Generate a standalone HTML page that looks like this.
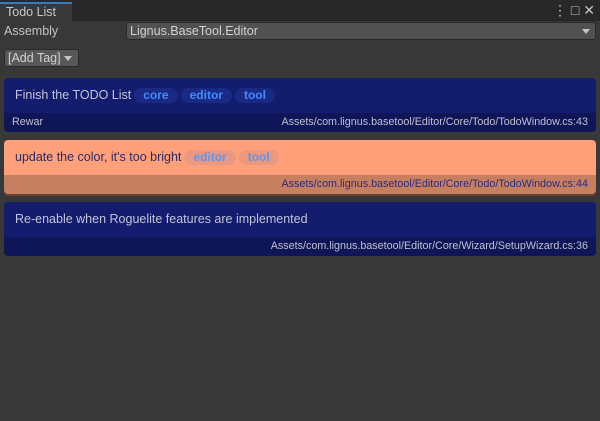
<!DOCTYPE html>
<html><head><style>
*{margin:0;padding:0;box-sizing:border-box}
body{width:600px;height:421px;background:#383838;font-family:"Liberation Sans",sans-serif;color:#c4c4c4;position:relative;overflow:hidden}
.tabbar{position:absolute;left:0;top:0;width:600px;height:21px;background:#282828;border-bottom:1px solid #232323}
.tab{position:absolute;left:0;top:2px;width:72px;height:19px;background:#383838;border-top:2px solid #3a79bb;font-size:12.5px;line-height:17px;padding-left:6px;color:#c8c8c8}
.icons{position:absolute;left:553px;top:2px;font-size:14px;color:#c4c4c4;width:45px}
.lab{position:absolute;left:4px;top:24px;font-size:12.5px}
.dd{position:absolute;left:126px;top:22px;width:470px;height:18px;background:#515151;border:1px solid #2a2a2a;border-radius:3px;font-size:12.5px;line-height:16px;padding-left:3px;color:#d2d2d2}
.dd:after{content:"";position:absolute;right:5px;top:6px;border:4px solid transparent;border-top:5px solid #c4c4c4;border-bottom:0}
.btn{position:absolute;left:4px;top:49px;width:75px;height:18px;background:#585858;border:1px solid #2a2a2a;border-radius:3px;font-size:12.5px;line-height:16px;padding-left:3px;color:#d2d2d2}
.btn:after{content:"";position:absolute;right:6px;top:6px;border:4px solid transparent;border-top:5px solid #c4c4c4;border-bottom:0}
.card{position:absolute;left:4px;width:592px;border-radius:4px;overflow:hidden}
.top{height:35px;padding-left:11px;font-size:12.5px;line-height:35px;display:flex;align-items:center}
.bot{height:19px;font-size:10.75px;line-height:19px;padding:0 8px;display:flex;justify-content:space-between}
.pill{display:inline-block;height:15px;line-height:15px;padding:0 9px;border-radius:8px;margin-left:3px;font-weight:bold;font-size:12px}
.blue .top{background:#131c6d;color:#c4c4d8}
.blue .bot{background:#0e1658;color:#c0c0d0}
.blue .pill{background:#1a2a84;color:#3f8bff}
.org .top{background:#ffa07a;color:#2a2a6a}
.org .bot{background:#c7805f;color:#2a2a80}
.org .pill{background:#eb9880;color:#5a98f0}
</style></head><body>
<div class="tabbar"><div class="tab">Todo List</div><div class="icons">&#8942;&nbsp;&#9633; &#10005;</div></div>
<div class="lab">Assembly</div>
<div class="dd">Lignus.BaseTool.Editor</div>
<div class="btn">[Add Tag]</div>
<div class="card blue" style="top:78px;height:54px"><div class="top">Finish the TODO List<span class="pill">core</span><span class="pill">editor</span><span class="pill">tool</span></div><div class="bot"><span>Rewar</span><span>Assets/com.lignus.basetool/Editor/Core/Todo/TodoWindow.cs:43</span></div></div>
<div class="card org" style="top:140px;height:54px;box-shadow:0 2px 0 #6a4232"><div class="top">update the color, it's too bright<span class="pill">editor</span><span class="pill">tool</span></div><div class="bot"><span></span><span>Assets/com.lignus.basetool/Editor/Core/Todo/TodoWindow.cs:44</span></div></div>
<div class="card blue" style="top:202px;height:54px"><div class="top">Re-enable when Roguelite features are implemented</div><div class="bot"><span></span><span>Assets/com.lignus.basetool/Editor/Core/Wizard/SetupWizard.cs:36</span></div></div>
</body></html>
